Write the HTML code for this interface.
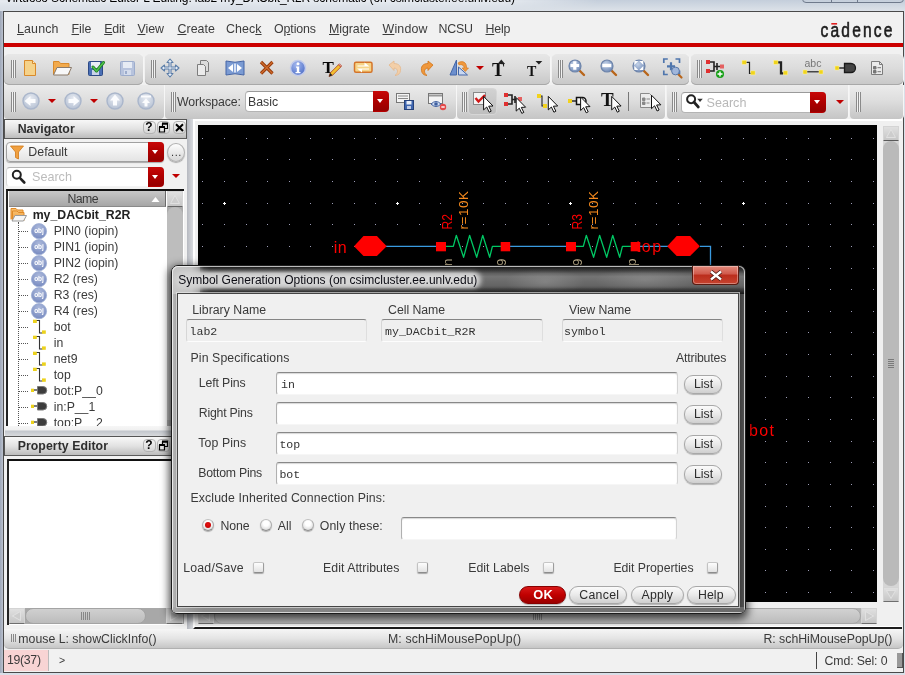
<!DOCTYPE html>
<html><head><meta charset="utf-8">
<style>
*{box-sizing:border-box;margin:0;padding:0}
html,body{width:905px;height:675px;overflow:hidden;background:#d9dfe8;font-family:"Liberation Sans",sans-serif;font-size:12px;color:#222}
.a{position:absolute}
#root{position:absolute;left:0;top:0;width:905px;height:675px;overflow:hidden;transform:translateZ(0);will-change:transform}
.menu{position:absolute;top:21px;font-size:12.6px;color:#333;letter-spacing:0.1px;white-space:pre}
.tbg{position:absolute;background:linear-gradient(#e7e7e7 0%,#dcdcdc 45%,#c7c7c7 100%);border-radius:5px;box-shadow:inset 0 -1px 0 #a8a8a8, 1px 0 0 #f6f6f6}
.tb2{background:linear-gradient(#ebebeb 0%,#dedede 45%,#c5c5c5 100%);border-radius:0 0 4px 4px;box-shadow:1px 0 0 #f6f6f6}
.grip{position:absolute;width:5.500px;background:linear-gradient(90deg,#8a8a8a 0,#8a8a8a .9px,#f2f2f2 .9px,#f2f2f2 2.100px,#8a8a8a 2.100px,#8a8a8a 3px,#f2f2f2 3px,#f2f2f2 4.300px,#8a8a8a 4.300px,#8a8a8a 5.200px,rgba(0,0,0,0) 5.200px)}
.lbl{position:absolute;white-space:pre;font-size:12.6px;color:#2a2a2a;letter-spacing:0.1px}
.mono{font-family:"Liberation Mono",monospace;font-size:11.5px;color:#222;white-space:pre}
.ic{position:absolute;width:20px;height:20px;overflow:visible}
.redbtn{position:absolute;background:linear-gradient(#c80808 0%,#b00000 45%,#960000 92%,#c40000 100%);border-radius:0 4px 4px 0}
.redbtn:after{content:"";position:absolute;left:50%;top:50%;margin:-2.500px 0 0 -3.800px;border:3.800px solid transparent;border-top:4.500px solid #fff;border-bottom:0}
.rarrow{position:absolute;width:0;height:0;border:4px solid transparent;border-top:4.500px solid #c00000;border-bottom:0}
.hdr{position:absolute;background:linear-gradient(#f8f8f8 0%,#e2e2e2 50%,#bcbcbc 100%);border-bottom:1px solid #5a5a5a;border-top:1px solid #555;border-left:1px solid #555;border-right:1px solid #555}
.hdr b{position:absolute;font-size:12.3px;color:#333;white-space:pre;letter-spacing:0.1px}
.hb{position:absolute;width:13px;height:13px;border-radius:4px;background:linear-gradient(#f4f4f4,#d6d6d6);border:1px solid #b2b2b2;font-weight:bold;font-size:12px;line-height:11px;text-align:center;color:#000}
.sbtn{position:absolute;background:linear-gradient(#e0e0e0,#c6c6c6);border:1px solid #d4d4d4;border-bottom-color:#6e6e6e}
.btn{position:absolute;height:18.500px;border-radius:9px;background:linear-gradient(#fbfbfb 0%,#e9e9e9 50%,#cfcfcf 100%);border:1px solid #a8a8a8;box-shadow:0 1px 1px rgba(0,0,0,.25);font-size:12.6px;color:#222;text-align:center;line-height:17px;letter-spacing:0.2px}
.inp{position:absolute;background:#fff;border:1px solid;border-color:#888 #d4d4d4 #f6f6f6 #b0b0b0;border-radius:3px;box-shadow:inset 0 1px 1px rgba(0,0,0,.16)}
.i2{border:1px solid #b4b4b4;border-top:1px solid #9a9a9a;box-shadow:none}
.ro{position:absolute;background:#efefef;border:1px solid;border-color:#858585 #dedede #fdfdfd #d6d6d6;border-radius:3px}
.cb{position:absolute;width:11px;height:11px;border:1px solid;border-color:#c6c6c6 #9c9c9c #8c8c8c #c2c2c2;border-radius:2px;background:linear-gradient(#fdfdfd,#e2e2e2);box-shadow:0 1px 1px rgba(0,0,0,.3)}
.rd{position:absolute;width:12px;height:12px;border:1px solid;border-color:#c0c0c0 #aaa #8e8e8e #b4b4b4;border-radius:50%;background:radial-gradient(circle at 50% 35%,#fff 30%,#e6e6e6 65%,#cdcdcd 100%);box-shadow:0 1px 1px rgba(0,0,0,.28)}
</style></head><body><div id="root">
<div class="a" style="left:0;top:0;width:905px;height:12px;background:linear-gradient(#c4cedb,#dfe4ea)"></div><div class="a" style="left:0;top:-2px;width:600px;height:12px;background:linear-gradient(90deg,rgba(255,255,255,.55) 0,rgba(255,255,255,.55) 500px,rgba(255,255,255,0) 600px);-webkit-mask-image:linear-gradient(#000 30%,transparent 100%);mask-image:linear-gradient(#000 30%,transparent 100%)"></div><span class="a" style="left:5.00px;top:-9.16px;font-size:12px;line-height:14px;color:#000;white-space:pre;letter-spacing:-0.115px;">Virtuoso Schematic Editor L Editing: lab2 my_DACbit_R2R schematic (on csimcluster.ee.unlv.edu)</span><div class="a" style="left:802px;top:-10px;width:102px;height:13px;border:1px solid #6f7a8c;border-radius:0 0 4px 4px;background:linear-gradient(90deg,transparent 28px,#6f7a8c 28px,#6f7a8c 29px,transparent 29px,transparent 54px,#6f7a8c 54px,#6f7a8c 55px,transparent 55px)"></div>
<div class="a" style="left:0;top:11px;width:4px;height:664px;background:linear-gradient(90deg,#9ea7b8,#c4cad6)"></div><div class="a" style="left:3px;top:11px;width:901px;height:662px;background:#f1f1f1;border:1px solid #4a4a4a"></div>
<span class="a" style="left:17.00px;top:21.70px;font-size:12.4px;line-height:14px;color:#3c3c3c;white-space:pre;letter-spacing:0.164px;"><u>L</u>aunch</span><span class="a" style="left:71.50px;top:21.70px;font-size:12.4px;line-height:14px;color:#3c3c3c;white-space:pre;letter-spacing:0.007px;"><u>F</u>ile</span><span class="a" style="left:104.20px;top:21.70px;font-size:12.4px;line-height:14px;color:#3c3c3c;white-space:pre;letter-spacing:-0.189px;"><u>E</u>dit</span><span class="a" style="left:137.40px;top:21.70px;font-size:12.4px;line-height:14px;color:#3c3c3c;white-space:pre;letter-spacing:-0.017px;"><u>V</u>iew</span><span class="a" style="left:177.40px;top:21.70px;font-size:12.4px;line-height:14px;color:#3c3c3c;white-space:pre;letter-spacing:0.077px;"><u>C</u>reate</span><span class="a" style="left:226.00px;top:21.70px;font-size:12.4px;line-height:14px;color:#3c3c3c;white-space:pre;letter-spacing:0.088px;">Chec<u>k</u></span><span class="a" style="left:274.00px;top:21.70px;font-size:12.4px;line-height:14px;color:#3c3c3c;white-space:pre;letter-spacing:-0.122px;">O<u>p</u>tions</span><span class="a" style="left:329.00px;top:21.70px;font-size:12.4px;line-height:14px;color:#3c3c3c;white-space:pre;letter-spacing:-0.057px;"><u>M</u>igrate</span><span class="a" style="left:382.50px;top:21.70px;font-size:12.4px;line-height:14px;color:#3c3c3c;white-space:pre;letter-spacing:0.180px;"><u>W</u>indow</span><span class="a" style="left:438.50px;top:21.70px;font-size:12.4px;line-height:14px;color:#3c3c3c;white-space:pre;letter-spacing:-0.212px;">NCSU</span><span class="a" style="left:485.50px;top:21.70px;font-size:12.4px;line-height:14px;color:#3c3c3c;white-space:pre;letter-spacing:-0.167px;"><u>H</u>elp</span><svg class="a" style="left:815px;top:16px;width:85px;height:26px" viewBox="815 16 85 26"><text x="820.5" y="36.700" font-family="Liberation Sans,sans-serif" font-size="19.500" fill="#1c1c1c" stroke="#1c1c1c" stroke-width=".6" textLength="90" lengthAdjust="spacing" transform="translate(820.5 0) scale(.8 1) translate(-820.5 0)">cadence</text><rect x="831.300" y="23" width="5.800" height="1.600" fill="#e02020"/></svg><div class="a" style="left:4px;top:43px;width:899px;height:4px;background:#cc0000"></div>
<div class="tbg " style="left:4px;top:53.5px;width:139px;height:31.200000000000003px"></div><div class="tbg " style="left:145px;top:53.5px;width:405px;height:31.200000000000003px"></div><div class="tbg " style="left:552px;top:53.5px;width:137px;height:31.200000000000003px"></div><div class="tbg " style="left:691px;top:53.5px;width:212px;height:31.200000000000003px"></div><div class="tbg tb2" style="left:4px;top:85px;width:160px;height:34px"></div><div class="tbg tb2" style="left:165px;top:85px;width:291px;height:34px"></div><div class="tbg tb2" style="left:457px;top:85px;width:208px;height:34px"></div><div class="tbg tb2" style="left:667px;top:85px;width:181px;height:34px"></div><div class="tbg tb2" style="left:850px;top:85px;width:53px;height:34px"></div><div class="grip" style="left:10.7px;top:60px;height:18px"></div><div class="grip" style="left:150.7px;top:60px;height:18px"></div><div class="grip" style="left:558px;top:60px;height:18px"></div><div class="grip" style="left:697px;top:60px;height:18px"></div><div class="grip" style="left:10.7px;top:92px;height:20px"></div><div class="grip" style="left:170.7px;top:92px;height:20px"></div><div class="grip" style="left:461.5px;top:92px;height:20px"></div><div class="grip" style="left:672px;top:92px;height:20px"></div><div class="grip" style="left:856px;top:92px;height:20px"></div><svg class="ic" style="left:20.0px;top:58.0px;width:20px;height:20px" viewBox="0 0 20 20"><path d="M4.5 2.5h8l3 3v12h-11z" fill="#f5d28a" stroke="#d98a2b" stroke-width="1"/><path d="M12.5 2.5v3h3" fill="#fbe9bf" stroke="#d98a2b" stroke-width="1"/></svg><svg class="ic" style="left:52.0px;top:58.0px;width:20px;height:20px" viewBox="0 0 20 20"><path d="M1.500 16.500v-13h5.500l1.500 2h8.500v11z" fill="#f2aa4c" stroke="#d98a2b"/><path d="M5 9.500h14.500l-3.500 7.500h-14.500z" fill="#f8f8f8" stroke="#8a7a6a"/></svg><svg class="ic" style="left:86.0px;top:58.0px;width:20px;height:20px" viewBox="0 0 20 20"><rect x="2.5" y="3.5" width="14" height="14" rx="1" fill="#4a6fb5" stroke="#2d4a86"/><rect x="5" y="4" width="9" height="6" fill="#e9eef7"/><rect x="6" y="12" width="7" height="5" fill="#c8d3e8"/><path d="M7 9l3.5 4 7-8.5" fill="none" stroke="#1f7d1f" stroke-width="3" stroke-linecap="round" stroke-linejoin="round"/><path d="M7 9l3.5 4 7-8.5" fill="none" stroke="#4fc44f" stroke-width="1.4" stroke-linecap="round" stroke-linejoin="round"/></svg><svg class="ic" style="left:117.0px;top:58.0px;width:20px;height:20px" viewBox="0 0 20 20"><rect x="3.5" y="3.5" width="14" height="14" rx="1" fill="#b7c3dd" stroke="#9caccc"/><rect x="6" y="4" width="9" height="6" fill="#e6ebf4"/><rect x="7" y="12" width="7" height="5" fill="#d4dcec"/><rect x="8" y="13" width="2" height="3" fill="#9caccc"/></svg><svg class="ic" style="left:160.0px;top:58.0px;width:20px;height:20px" viewBox="0 0 20 20"><path d="M10 1l3 3.5h-2v4.5h4.500v-2l3.500 3-3.500 3v-2h-4.500v4.500h2l-3 3.500-3-3.500h2v-4.500h-4.500v2l-3.500-3 3.500-3v2h4.500v-4.500h-2z" fill="#e8eef6" stroke="#5b7da8" stroke-width="1.1" stroke-linejoin="round"/></svg><svg class="ic" style="left:193.0px;top:58.0px;width:20px;height:20px" viewBox="0 0 20 20"><path d="M7.500 2.500h6l2 2v9h-8z" fill="#dcdcdc" stroke="#7d7d7d"/><path d="M4.500 6.500h6l2 2v9h-8z" fill="#ebebeb" stroke="#7d7d7d"/></svg><svg class="ic" style="left:225.0px;top:58.0px;width:20px;height:20px" viewBox="0 0 20 20"><path d="M1 3q9 2.500 18 0v14q-9-2.500-18 0z" fill="#7b9bd3" stroke="#4464a6" stroke-width="1"/><path d="M3 10l5-4v8zM17 10l-5-4v8z" fill="#fff"/><rect x="9" y="5.500" width="2" height="9" fill="#d8e2f4"/></svg><svg class="ic" style="left:256.0px;top:58.0px;width:20px;height:20px" viewBox="0 0 20 20"><path d="M5 4l11.500 11.500M16.500 4l-11.500 11.500" stroke="#963a0c" stroke-width="3.200"/><path d="M5 4l11.500 11.500M16.500 4l-11.500 11.500" stroke="#d06c2c" stroke-width="1.300"/></svg><svg class="ic" style="left:288.0px;top:58.0px;width:20px;height:20px" viewBox="0 0 20 20"><defs><radialGradient id="ig" cx=".4" cy=".3" r=".8"><stop offset="0" stop-color="#a4b8ee"/><stop offset="1" stop-color="#4668c4"/></radialGradient></defs><circle cx="10" cy="10" r="7.500" fill="url(#ig)" stroke="#c2cbea" stroke-width="1.500"/><circle cx="10" cy="5.800" r="1.500" fill="#fff"/><path d="M8 8.500h3.200v5.500h1.300v1.300h-5v-1.300h1.300v-4.200h-.8z" fill="#fff"/></svg><svg class="ic" style="left:321.0px;top:58.0px;width:20px;height:20px" viewBox="0 0 20 20"><text x="1.500" y="14.800" font-family="Liberation Serif,serif" font-weight="bold" font-size="17" fill="#080808">T</text><path d="M8 18.500l1.200-3.500 8.300-8.300 2.300 2.300-8.300 8.300z" fill="#f4c030" stroke="#a8401c" stroke-width=".8"/><path d="M17.500 6.700l1-1 2.300 2.300-1 1z" fill="#f0a0a0" stroke="#a8401c" stroke-width=".6"/><path d="M8 18.500l1.200-3.500 2.300 2.300z" fill="#222"/></svg><svg class="ic" style="left:353.0px;top:58.0px;width:20px;height:20px" viewBox="0 0 20 20"><rect x="1.500" y="4.300" width="17.500" height="10" rx="1.500" fill="#f6d488" stroke="#d4742a" stroke-width="1.500"/><path d="M4.500 7.500h7v-3l5 4h-12zM16 11.500h-7v3l-5-4h12z" fill="#fff"/></svg><svg class="ic" style="left:385.0px;top:58.0px;width:20px;height:20px" viewBox="0 0 20 20"><path d="M4 7l5-4v2.500c5 0 8 3 6 9-1 2-3 3-5 3 3-2 4-7-1-7.500v2.500z" fill="#f3cfa8" stroke="#e5b88c" stroke-width=".8"/></svg><svg class="ic" style="left:417.0px;top:58.0px;width:20px;height:20px" viewBox="0 0 20 20"><path d="M16 7l-5-4v2.500c-5 0-8 3-6 9 1 2 3 3 5 3-3-2-4-7 1-7.500v2.500z" fill="#f0983c" stroke="#d07418" stroke-width=".8"/></svg><svg class="ic" style="left:449.0px;top:58.0px;width:20px;height:20px" viewBox="0 0 20 20"><path d="M1 17l6.500-15v15z" fill="#6c8fce" stroke="#4467a8"/><path d="M9.500 17v-8l9 8z" fill="#c9d8f2" stroke="#4467a8"/><path d="M9 5c4-3 9-1 8.500 5h2l-3.200 3.500-3.200-3.500h2c0-3-3-4-5-3z" fill="#f0983c" stroke="#d07418" stroke-width=".6"/></svg><svg class="ic" style="left:489.0px;top:58.0px;width:20px;height:20px" viewBox="0 0 20 20"><text x="3" y="18.400" font-family="Liberation Serif,serif" font-weight="bold" font-size="18.500" fill="#111">T</text><path d="M8.500 6l3.800-4.500 3.800 4.500z" fill="#222"/></svg><svg class="ic" style="left:521.0px;top:58.0px;width:20px;height:20px" viewBox="0 0 20 20"><text x="6" y="17.700" font-family="Liberation Serif,serif" font-weight="bold" font-size="14" fill="#111">T</text><path d="M14.500 3l3.400 3.600 3.400-3.600z" fill="#222"/></svg><svg class="ic" style="left:567.0px;top:58.0px;width:20px;height:20px" viewBox="0 0 20 20"><defs><radialGradient id="mg" cx=".4" cy=".35" r=".7"><stop offset="0" stop-color="#c4d2e8"/><stop offset="1" stop-color="#6f8ab6"/></radialGradient></defs><path d="M12 12l5 5" stroke="#b8651a" stroke-width="2.4" stroke-linecap="round"/><circle cx="8" cy="8" r="6" fill="url(#mg)" stroke="#6d84aa" stroke-width="1.2"/><path d="M3.500 7.500h8.600M7.800 3.200v8.600" stroke="#fff" stroke-width="3.200"/></svg><svg class="ic" style="left:599.0px;top:58.0px;width:20px;height:20px" viewBox="0 0 20 20"><defs><radialGradient id="mg" cx=".4" cy=".35" r=".7"><stop offset="0" stop-color="#c4d2e8"/><stop offset="1" stop-color="#6f8ab6"/></radialGradient></defs><path d="M12 12l5 5" stroke="#b8651a" stroke-width="2.4" stroke-linecap="round"/><circle cx="8" cy="8" r="6" fill="url(#mg)" stroke="#6d84aa" stroke-width="1.2"/><path d="M3.300 7.500h9" stroke="#fff" stroke-width="3.400"/></svg><svg class="ic" style="left:631.0px;top:58.0px;width:20px;height:20px" viewBox="0 0 20 20"><defs><radialGradient id="mg" cx=".4" cy=".35" r=".7"><stop offset="0" stop-color="#c4d2e8"/><stop offset="1" stop-color="#6f8ab6"/></radialGradient></defs><path d="M12 12l5 5" stroke="#b8651a" stroke-width="2.4" stroke-linecap="round"/><circle cx="8" cy="8" r="6" fill="url(#mg)" stroke="#6d84aa" stroke-width="1.2"/><path d="M3.300 3h4l-4 4zM12.300 3h-4l4 4zM3.300 12h4l-4-4zM12.300 12h-4l4-4z" fill="#fff"/></svg><svg class="ic" style="left:662.0px;top:58.0px;width:20px;height:20px" viewBox="0 0 20 20"><path d="M1.800 5v-4h4M13.500 1h4v4M1.800 12.500v4h4M17.500 12.500v4" fill="none" stroke="#4f76ad" stroke-width="1.700"/><path d="M5 8.300h8M9 4.300v8" stroke="#4f76ad" stroke-width="2.200"/><path d="M15.500 15.500l4 4" stroke="#b8651a" stroke-width="2.200" stroke-linecap="round"/><circle cx="13.500" cy="13" r="3.900" fill="#9fb6dc" stroke="#5a78a6"/></svg><svg class="ic" style="left:705.0px;top:58.0px;width:20px;height:20px" viewBox="0 0 20 20"><path d="M4 4h5v9h-5M9 8.500h7M12 5v7" fill="none" stroke="#222" stroke-width="1.600"/><rect x="1" y="2" width="4" height="4" fill="#e03030"/><rect x="1" y="11" width="4" height="4" fill="#e03030"/><rect x="15" y="6.500" width="4" height="4" fill="#e46060"/><circle cx="15" cy="16" r="4" fill="#18a018"/><path d="M12.500 16h5M15 13.500v5" stroke="#fff" stroke-width="1.400"/></svg><svg class="ic" style="left:738.0px;top:58.0px;width:20px;height:20px" viewBox="0 0 20 20"><path d="M8 4.300h3.500v11h2.500" fill="none" stroke="#222" stroke-width="1.200"/><rect x="4" y="2.300" width="4.300" height="4" fill="#f0d41c" stroke="#fff3a0" stroke-width=".5"/><rect x="12.800" y="12.900" width="4.300" height="4" fill="#f0d41c" stroke="#fff3a0" stroke-width=".5"/></svg><svg class="ic" style="left:770.0px;top:58.0px;width:20px;height:20px" viewBox="0 0 20 20"><path d="M8 4.300h3v11h3" fill="none" stroke="#222" stroke-width="2.300"/><rect x="3.700" y="2.300" width="4.300" height="4" fill="#f0d41c" stroke="#fff3a0" stroke-width=".5"/><rect x="13.300" y="12.900" width="4.300" height="4" fill="#f0d41c" stroke="#fff3a0" stroke-width=".5"/></svg><svg class="ic" style="left:802.0px;top:58.0px;width:20px;height:20px" viewBox="0 0 20 20"><text x="2.500" y="8.500" font-family="Liberation Sans,sans-serif" font-size="10.500" fill="#777">abc</text><path d="M3 13.800h16" stroke="#222" stroke-width="1.200"/><rect x="1" y="12" width="4" height="4" fill="#f0d41c" stroke="#fff3a0" stroke-width=".5"/><rect x="17" y="12" width="4" height="4" fill="#f0d41c" stroke="#fff3a0" stroke-width=".5"/></svg><svg class="ic" style="left:835.0px;top:58.0px;width:20px;height:20px" viewBox="0 0 20 20"><path d="M3 10h6" stroke="#222" stroke-width="1.400"/><path d="M9.500 5.500h6.500a4.500 4.500 0 0 1 0 9h-6.500z" fill="#444" stroke="#1a1a1a" stroke-width="1.300"/><rect x="0" y="8" width="4" height="4" fill="#f0d41c" stroke="#fff3a0" stroke-width=".5"/></svg><svg class="ic" style="left:867.0px;top:58.0px;width:20px;height:20px" viewBox="0 0 20 20"><path d="M4.500 3.500h8l3 3v10h-11z" fill="#eaeaea" stroke="#7c7c7c"/><path d="M12.500 3.500v3h3" fill="none" stroke="#7c7c7c"/><path d="M6.500 8.500h2.500v2.500h-2.500zM6.500 12.500h2.500v2.500h-2.500zM10.500 9.700h3.500M10.500 13.700h3.500" fill="#777" stroke="#777" stroke-width="1"/></svg><div class="rarrow" style="left:476px;top:66px"></div><svg class="ic" style="left:21.0px;top:91.0px;width:20px;height:20px" viewBox="0 0 20 20"><defs><radialGradient id="ng" cx=".5" cy=".35" r=".7"><stop offset="0" stop-color="#e6eaf1"/><stop offset="1" stop-color="#b4bfd2"/></radialGradient></defs><circle cx="10" cy="10" r="8" fill="url(#ng)" stroke="#aab6cb" stroke-width="1.400"/><path d="M3.500 10l6-5v3h5v4h-5v3z" fill="#fbfcfe"/></svg><svg class="ic" style="left:63.0px;top:91.0px;width:20px;height:20px" viewBox="0 0 20 20"><defs><radialGradient id="ng" cx=".5" cy=".35" r=".7"><stop offset="0" stop-color="#e6eaf1"/><stop offset="1" stop-color="#b4bfd2"/></radialGradient></defs><circle cx="10" cy="10" r="8" fill="url(#ng)" stroke="#aab6cb" stroke-width="1.400"/><path d="M16.500 10l-6-5v3h-5v4h5v3z" fill="#fbfcfe"/></svg><svg class="ic" style="left:105.0px;top:91.0px;width:20px;height:20px" viewBox="0 0 20 20"><defs><radialGradient id="ng" cx=".5" cy=".35" r=".7"><stop offset="0" stop-color="#e6eaf1"/><stop offset="1" stop-color="#b4bfd2"/></radialGradient></defs><circle cx="10" cy="10" r="8" fill="url(#ng)" stroke="#aab6cb" stroke-width="1.400"/><path d="M10 3.500l-5 6h3v5h4v-5h3z" fill="#fbfcfe"/></svg><svg class="ic" style="left:136.0px;top:91.0px;width:20px;height:20px" viewBox="0 0 20 20"><defs><radialGradient id="ng" cx=".5" cy=".35" r=".7"><stop offset="0" stop-color="#e6eaf1"/><stop offset="1" stop-color="#b4bfd2"/></radialGradient></defs><circle cx="10" cy="10" r="8" fill="url(#ng)" stroke="#aab6cb" stroke-width="1.400"/><path d="M5 4.500h10v2h-10zM10 7.500l-4 4.500h2.500v3.500h3v-3.500h2.500z" fill="#fbfcfe"/></svg><svg class="ic" style="left:395.0px;top:91.0px;width:20px;height:20px" viewBox="0 0 20 20"><rect x="1.500" y="2.500" width="13" height="9" fill="#f4f4f4" stroke="#777"/><path d="M3 5h10M3 7.500h10" stroke="#888"/><rect x="9.500" y="9.500" width="9" height="9" fill="#3f66b0" stroke="#27427a"/><rect x="11.500" y="10" width="5" height="3.500" fill="#e8eef8"/><rect x="12" y="15" width="4" height="3" fill="#c0cce4"/></svg><svg class="ic" style="left:427.0px;top:91.0px;width:20px;height:20px" viewBox="0 0 20 20"><rect x="1.500" y="2.500" width="14" height="10" fill="#f4f4f4" stroke="#777"/><path d="M2 4.500h13" stroke="#999" stroke-width="2"/><path d="M4 13q5-5 10 0q-5 5-10 0z" fill="#cfdcf2" stroke="#3f5f9f"/><circle cx="9" cy="13" r="1.800" fill="#3f5f9f"/><circle cx="16" cy="16" r="3.200" fill="#e24a4a"/><path d="M14.300 16h3.400" stroke="#fff" stroke-width="1.400"/></svg><div class="rarrow" style="left:48px;top:99px"></div><div class="rarrow" style="left:90px;top:99px"></div><span class="a" style="left:177.00px;top:94.74px;font-size:12.3px;line-height:14px;color:#3a3a3a;white-space:pre;letter-spacing:-0.079px;">Workspace:</span><div class="inp i2" style="left:245px;top:91px;width:144px;height:21px;border-radius:4px"></div><span class="a" style="left:248.00px;top:94.74px;font-size:12.3px;line-height:14px;color:#3a3a3a;white-space:pre;letter-spacing:0.000px;">Basic</span><div class="redbtn" style="left:373px;top:91px;width:16px;height:21px"></div><div class="a" style="left:468px;top:88px;width:29px;height:27px;border-radius:4px;background:linear-gradient(#d2d2d2,#bebebe);border:1px solid #d6d6d6"></div><svg class="ic" style="left:472.0px;top:91.0px;width:20px;height:20px" viewBox="0 0 20 20"><rect x="1.500" y="1.500" width="12" height="12" fill="#f4f4f4" stroke="#888"/><path d="M3.500 7l3 3.500 6.500-6.500" fill="none" stroke="#d01818" stroke-width="2.400"/><path d="M11.6 5.4l0 13.500 3.100-2.900 2.500 5.200 2-1-2.500-5 4.300-.200z" fill="#fff" stroke="#111" stroke-width="1" stroke-linejoin="round"/></svg><svg class="ic" style="left:503.0px;top:91.0px;width:20px;height:20px" viewBox="0 0 20 20"><path d="M4 4h5v9h-5M9 8.500h6M12 5v7" fill="none" stroke="#222" stroke-width="1.600"/><rect x="1" y="2" width="4" height="4" fill="#e03030"/><rect x="1" y="11" width="4" height="4" fill="#e03030"/><rect x="15" y="6" width="4" height="4" fill="#e46060"/><path d="M13.2 6.6l0 13.500 3.100-2.900 2.500 5.200 2-1-2.500-5 4.300-.200z" fill="#fff" stroke="#111" stroke-width="1" stroke-linejoin="round"/></svg><svg class="ic" style="left:534.0px;top:91.0px;width:20px;height:20px" viewBox="0 0 20 20"><path d="M5 5h3v10h3" fill="none" stroke="#222" stroke-width="1.100"/><rect x="3" y="3" width="4" height="4" fill="#f2d21c"/><rect x="9" y="13" width="4" height="4" fill="#f2d21c"/><path d="M14.3 5.4l0 13.500 3.100-2.900 2.500 5.200 2-1-2.500-5 4.300-.200z" fill="#fff" stroke="#111" stroke-width="1" stroke-linejoin="round"/></svg><svg class="ic" style="left:568.0px;top:91.0px;width:20px;height:20px" viewBox="0 0 20 20"><path d="M3 10h6" stroke="#222" stroke-width="1.400"/><path d="M8.500 6.500h6a3.500 3.500 0 0 1 0 7h-6z" fill="#f4f4f4" stroke="#111" stroke-width="1.500"/><rect x="0" y="8" width="4" height="4" fill="#f2d21c"/><path d="M12.6 6l0 13.500 3.100-2.900 2.500 5.200 2-1-2.500-5 4.300-.200z" fill="#fff" stroke="#111" stroke-width="1" stroke-linejoin="round"/></svg><svg class="ic" style="left:601.0px;top:91.0px;width:20px;height:20px" viewBox="0 0 20 20"><text x="0" y="15" font-family="Liberation Serif,serif" font-weight="bold" font-size="19" fill="#111">T</text><path d="M10.7 5.4l0 13.500 3.100-2.900 2.500 5.200 2-1-2.500-5 4.300-.200z" fill="#fff" stroke="#111" stroke-width="1" stroke-linejoin="round"/></svg><svg class="ic" style="left:638.0px;top:91.0px;width:20px;height:20px" viewBox="0 0 20 20"><path d="M2.500 2.500h9l3 3v11h-12z" fill="#ececec" stroke="#8a8a8a"/><path d="M4.500 7h2.500v2.500h-2.500zM4.500 11h2.500v2.500h-2.500zM8.500 8h3.500M8.500 12h3" fill="#888" stroke="#888" stroke-width="1"/><path d="M13.5 4.2l0 13.500 3.100-2.900 2.500 5.200 2-1-2.500-5 4.300-.200z" fill="#fff" stroke="#111" stroke-width="1" stroke-linejoin="round"/></svg><div class="a" style="left:628px;top:92px;width:1px;height:19px;background:#777"></div><div class="inp i2" style="left:681px;top:92px;width:145px;height:21px;border-radius:4px"></div><svg class="ic" style="left:685px;top:93px;width:20px;height:18px" viewBox="0 0 18 16"><circle cx="5.500" cy="5.500" r="3.600" fill="#fff" stroke="#222" stroke-width="1.800"/><path d="M8 8l4 4.500" stroke="#222" stroke-width="2.400" stroke-linecap="round"/><path d="M11 5h5l-2.500 3z" fill="#333"/></svg><span class="a" style="left:706.50px;top:95.63px;font-size:12.6px;line-height:14px;color:#b8b8b8;white-space:pre;letter-spacing:0.000px;">Search</span><div class="redbtn" style="left:810px;top:92px;width:16px;height:21px"></div><div class="rarrow" style="left:836px;top:100px"></div>
<div class="a" style="left:187px;top:119px;width:6px;height:510px;background:linear-gradient(90deg,#b6b9c0,#d8dade)"></div><div class="hdr" style="left:4px;top:119px;width:183px;height:20px"></div><span class="a" style="left:17.70px;top:121.74px;font-size:12.3px;line-height:14px;color:#2e2e2e;white-space:pre;letter-spacing:0.034px;font-weight:bold;">Navigator</span><div class="hb" style="left:142.5px;top:121.3px">?</div><div class="hb" style="left:157.3px;top:121.3px"><svg width="11" height="11" viewBox="0 0 11 11" style="position:absolute;left:0;top:0"><path d="M4.500 2h5v4.500h-5z" fill="#e8e8e8" stroke="#000" stroke-width="1.200"/><path d="M4 1.500h6" stroke="#000" stroke-width="2"/><path d="M1.500 5.500h5v4.500h-5z" fill="#e8e8e8" stroke="#000" stroke-width="1.200"/><path d="M1 5h6" stroke="#000" stroke-width="2"/></svg></div><div class="hb" style="left:172.5px;top:121.3px"><svg width="11" height="11" viewBox="0 0 11 11" style="position:absolute;left:0;top:0"><path d="M2 2.300l7 6.700M9 2.300l-7 6.700" stroke="#000" stroke-width="2"/></svg></div><div class="a" style="left:6px;top:142px;width:158px;height:20px;border-radius:4px;background:linear-gradient(#fcfcfc,#e4e4e4);border:1px solid #a0a0a0;box-shadow:0 1px 1px rgba(0,0,0,.3)"></div><svg class="ic" style="left:10px;top:145px;width:14px;height:15px" viewBox="0 0 14 15"><path d="M0.500 1h13l-5 6v7l-3-1.500v-5.500z" fill="#f0a040" stroke="#d07818" stroke-width=".8"/></svg><span class="a" style="left:28.30px;top:144.70px;font-size:12.4px;line-height:14px;color:#3a3a3a;white-space:pre;letter-spacing:0.000px;">Default</span><div class="redbtn" style="left:148px;top:142px;width:16px;height:20px"></div><div class="a" style="left:167px;top:142.500px;width:18px;height:19px;border-radius:50%;background:linear-gradient(#fdfdfd,#d6d6d6);border:1px solid #b0b0b0;box-shadow:0 1px 1px rgba(0,0,0,.3);font-size:11px;line-height:17px;text-align:center;color:#333;letter-spacing:.6px;text-indent:1px">...</div><div class="inp i2" style="left:6px;top:167px;width:158px;height:20px;border-radius:4px;border-color:#b4b4b4 #e0e0e0 #f4f4f4 #d8d8d8"></div><svg class="ic" style="left:11px;top:169px;width:16px;height:16px" viewBox="0 0 16 16"><circle cx="5.800" cy="5.800" r="4" fill="#fff" stroke="#222" stroke-width="2"/><path d="M8.800 8.800l4.500 4.700" stroke="#222" stroke-width="2.600" stroke-linecap="round"/></svg><span class="a" style="left:32.00px;top:169.63px;font-size:12.6px;line-height:14px;color:#bcbcbc;white-space:pre;letter-spacing:0.000px;">Search</span><div class="redbtn" style="left:148px;top:167px;width:16px;height:20px"></div><div class="rarrow" style="left:172px;top:174px"></div><div class="a" style="left:6px;top:189px;width:178px;height:237px;background:#fff;border-left:2.500px solid #222;border-top:2px solid #111"></div><div class="a" style="left:9px;top:191px;width:157px;height:16px;background:linear-gradient(#c8c8c8,#a6a6a6);border-bottom:1px solid #8a8a8a;border-right:1px solid #6a6a6a"></div><span class="a" style="left:67.50px;top:191.74px;font-size:12.3px;line-height:14px;color:#3a3a3a;white-space:pre;letter-spacing:-0.603px;">Name</span><svg class="ic" style="left:150px;top:196px;width:11px;height:7px" viewBox="0 0 11 7"><path d="M1.500 6l4-5 4 5z" fill="#fff"/></svg><div class="a" style="left:167px;top:191px;width:16px;height:235px;background:#aaaaaa"></div><div class="sbtn" style="left:167px;top:191px;width:16px;height:16px;border-bottom:1px solid #666"></div><svg class="ic" style="left:170px;top:195px;width:10px;height:9px" viewBox="0 0 10 9"><path d="M0.500 8.500l4.500-8 4.500 8z" fill="#cdcdcd" stroke="#e4e4e4" stroke-width=".8" stroke-width="1"/></svg><div class="a" style="left:167px;top:207px;width:16px;height:213px;border-radius:8px 8px 0 0;background:#bdbdbd"></div><svg class="ic" style="left:10px;top:206px;width:18px;height:17px" viewBox="0 0 18 17"><defs><linearGradient id="fg" x1="0" y1="0" x2="0" y2="1"><stop offset="0" stop-color="#f8c070"/><stop offset="1" stop-color="#ee9a38"/></linearGradient></defs><path d="M1 13.500v-11h5l1.500 1.500h5.500v3" fill="url(#fg)" stroke="#e08a28"/><path d="M2.500 14.500v-9.500h4.500l1.500 1.500h5.500v8z" fill="url(#fg)" stroke="#e08a28"/><path d="M5 9.500h11.500l-3 5.500h-11.500z" fill="#f6f6f6" stroke="#9a9a9a"/></svg><span class="a" style="left:32.70px;top:207.74px;font-size:12.3px;line-height:14px;color:#222;white-space:pre;letter-spacing:-0.003px;font-weight:bold;">my_DACbit_R2R</span><div class="a" style="left:18px;top:222px;width:0;height:204px;border-left:1px dotted #555"></div><div class="a" style="left:9px;top:222px;width:157px;height:203.500px;overflow:hidden"><div class="a" style="left:10px;top:9px;width:9px;height:0;border-top:1px dotted #555"></div><svg class="ic" style="left:22px;top:1px;width:16px;height:16px" viewBox="0 0 16 16"><defs><radialGradient id="og" cx=".5" cy=".3" r=".8"><stop offset="0" stop-color="#aebbdc"/><stop offset="1" stop-color="#6f83bc"/></radialGradient></defs><circle cx="8" cy="8.200" r="7.600" fill="url(#og)" stroke="#9fb0d6" stroke-width=".8"/><text x="8" y="10.300" text-anchor="middle" font-family="Liberation Sans,sans-serif" font-weight="bold" font-size="6.500" fill="#fff">obj</text></svg><span class="a" style="left:44.70px;top:1.76px;font-size:12.25px;line-height:14px;color:#3a3a3a;white-space:pre;letter-spacing:0.000px;">PIN0 (iopin)</span><div class="a" style="left:10px;top:25px;width:9px;height:0;border-top:1px dotted #555"></div><svg class="ic" style="left:22px;top:17px;width:16px;height:16px" viewBox="0 0 16 16"><defs><radialGradient id="og" cx=".5" cy=".3" r=".8"><stop offset="0" stop-color="#aebbdc"/><stop offset="1" stop-color="#6f83bc"/></radialGradient></defs><circle cx="8" cy="8.200" r="7.600" fill="url(#og)" stroke="#9fb0d6" stroke-width=".8"/><text x="8" y="10.300" text-anchor="middle" font-family="Liberation Sans,sans-serif" font-weight="bold" font-size="6.500" fill="#fff">obj</text></svg><span class="a" style="left:44.70px;top:17.76px;font-size:12.25px;line-height:14px;color:#3a3a3a;white-space:pre;letter-spacing:0.000px;">PIN1 (iopin)</span><div class="a" style="left:10px;top:41px;width:9px;height:0;border-top:1px dotted #555"></div><svg class="ic" style="left:22px;top:33px;width:16px;height:16px" viewBox="0 0 16 16"><defs><radialGradient id="og" cx=".5" cy=".3" r=".8"><stop offset="0" stop-color="#aebbdc"/><stop offset="1" stop-color="#6f83bc"/></radialGradient></defs><circle cx="8" cy="8.200" r="7.600" fill="url(#og)" stroke="#9fb0d6" stroke-width=".8"/><text x="8" y="10.300" text-anchor="middle" font-family="Liberation Sans,sans-serif" font-weight="bold" font-size="6.500" fill="#fff">obj</text></svg><span class="a" style="left:44.70px;top:33.76px;font-size:12.25px;line-height:14px;color:#3a3a3a;white-space:pre;letter-spacing:0.000px;">PIN2 (iopin)</span><div class="a" style="left:10px;top:57px;width:9px;height:0;border-top:1px dotted #555"></div><svg class="ic" style="left:22px;top:49px;width:16px;height:16px" viewBox="0 0 16 16"><defs><radialGradient id="og" cx=".5" cy=".3" r=".8"><stop offset="0" stop-color="#aebbdc"/><stop offset="1" stop-color="#6f83bc"/></radialGradient></defs><circle cx="8" cy="8.200" r="7.600" fill="url(#og)" stroke="#9fb0d6" stroke-width=".8"/><text x="8" y="10.300" text-anchor="middle" font-family="Liberation Sans,sans-serif" font-weight="bold" font-size="6.500" fill="#fff">obj</text></svg><span class="a" style="left:44.70px;top:49.76px;font-size:12.25px;line-height:14px;color:#3a3a3a;white-space:pre;letter-spacing:0.000px;">R2 (res)</span><div class="a" style="left:10px;top:73px;width:9px;height:0;border-top:1px dotted #555"></div><svg class="ic" style="left:22px;top:65px;width:16px;height:16px" viewBox="0 0 16 16"><defs><radialGradient id="og" cx=".5" cy=".3" r=".8"><stop offset="0" stop-color="#aebbdc"/><stop offset="1" stop-color="#6f83bc"/></radialGradient></defs><circle cx="8" cy="8.200" r="7.600" fill="url(#og)" stroke="#9fb0d6" stroke-width=".8"/><text x="8" y="10.300" text-anchor="middle" font-family="Liberation Sans,sans-serif" font-weight="bold" font-size="6.500" fill="#fff">obj</text></svg><span class="a" style="left:44.70px;top:65.76px;font-size:12.25px;line-height:14px;color:#3a3a3a;white-space:pre;letter-spacing:0.000px;">R3 (res)</span><div class="a" style="left:10px;top:89px;width:9px;height:0;border-top:1px dotted #555"></div><svg class="ic" style="left:22px;top:81px;width:16px;height:16px" viewBox="0 0 16 16"><defs><radialGradient id="og" cx=".5" cy=".3" r=".8"><stop offset="0" stop-color="#aebbdc"/><stop offset="1" stop-color="#6f83bc"/></radialGradient></defs><circle cx="8" cy="8.200" r="7.600" fill="url(#og)" stroke="#9fb0d6" stroke-width=".8"/><text x="8" y="10.300" text-anchor="middle" font-family="Liberation Sans,sans-serif" font-weight="bold" font-size="6.500" fill="#fff">obj</text></svg><span class="a" style="left:44.70px;top:81.76px;font-size:12.25px;line-height:14px;color:#3a3a3a;white-space:pre;letter-spacing:0.000px;">R4 (res)</span><div class="a" style="left:10px;top:105px;width:9px;height:0;border-top:1px dotted #555"></div><svg class="ic" style="left:22px;top:97px;width:16px;height:16px" viewBox="0 0 16 16"><path d="M5 1.500h3.500v12.500h3" fill="none" stroke="#333" stroke-width="1.100"/><rect x="2" y="0.700" width="3.800" height="3.300" fill="#ecd21c"/><rect x="11" y="11.400" width="3.800" height="3.400" fill="#ecd21c"/></svg><span class="a" style="left:44.70px;top:97.76px;font-size:12.25px;line-height:14px;color:#3a3a3a;white-space:pre;letter-spacing:0.000px;">bot</span><div class="a" style="left:10px;top:121px;width:9px;height:0;border-top:1px dotted #555"></div><svg class="ic" style="left:22px;top:113px;width:16px;height:16px" viewBox="0 0 16 16"><path d="M5 1.500h3.500v12.500h3" fill="none" stroke="#333" stroke-width="1.100"/><rect x="2" y="0.700" width="3.800" height="3.300" fill="#ecd21c"/><rect x="11" y="11.400" width="3.800" height="3.400" fill="#ecd21c"/></svg><span class="a" style="left:44.70px;top:113.76px;font-size:12.25px;line-height:14px;color:#3a3a3a;white-space:pre;letter-spacing:0.000px;">in</span><div class="a" style="left:10px;top:137px;width:9px;height:0;border-top:1px dotted #555"></div><svg class="ic" style="left:22px;top:129px;width:16px;height:16px" viewBox="0 0 16 16"><path d="M5 1.500h3.500v12.500h3" fill="none" stroke="#333" stroke-width="1.100"/><rect x="2" y="0.700" width="3.800" height="3.300" fill="#ecd21c"/><rect x="11" y="11.400" width="3.800" height="3.400" fill="#ecd21c"/></svg><span class="a" style="left:44.70px;top:129.76px;font-size:12.25px;line-height:14px;color:#3a3a3a;white-space:pre;letter-spacing:0.000px;">net9</span><div class="a" style="left:10px;top:153px;width:9px;height:0;border-top:1px dotted #555"></div><svg class="ic" style="left:22px;top:145px;width:16px;height:16px" viewBox="0 0 16 16"><path d="M5 1.500h3.500v12.500h3" fill="none" stroke="#333" stroke-width="1.100"/><rect x="2" y="0.700" width="3.800" height="3.300" fill="#ecd21c"/><rect x="11" y="11.400" width="3.800" height="3.400" fill="#ecd21c"/></svg><span class="a" style="left:44.70px;top:145.76px;font-size:12.25px;line-height:14px;color:#3a3a3a;white-space:pre;letter-spacing:0.000px;">top</span><div class="a" style="left:10px;top:169px;width:9px;height:0;border-top:1px dotted #555"></div><svg class="ic" style="left:20px;top:161px;width:18px;height:16px" viewBox="0 0 18 16"><path d="M4 7h5" stroke="#333" stroke-width="1.300"/><path d="M8.500 3.500h5.500a3.500 3.500 0 0 1 0 7.500h-5.500z" fill="#3c3c3c" stroke="#7a7a7a" stroke-width="1"/><rect x="2" y="5.700" width="3" height="3.300" fill="#ecd21c"/></svg><span class="a" style="left:44.70px;top:161.76px;font-size:12.25px;line-height:14px;color:#3a3a3a;white-space:pre;letter-spacing:0.000px;">bot:P__0</span><div class="a" style="left:10px;top:185px;width:9px;height:0;border-top:1px dotted #555"></div><svg class="ic" style="left:20px;top:177px;width:18px;height:16px" viewBox="0 0 18 16"><path d="M4 7h5" stroke="#333" stroke-width="1.300"/><path d="M8.500 3.500h5.500a3.500 3.500 0 0 1 0 7.500h-5.500z" fill="#3c3c3c" stroke="#7a7a7a" stroke-width="1"/><rect x="2" y="5.700" width="3" height="3.300" fill="#ecd21c"/></svg><span class="a" style="left:44.70px;top:177.76px;font-size:12.25px;line-height:14px;color:#3a3a3a;white-space:pre;letter-spacing:0.000px;">in:P__1</span><div class="a" style="left:10px;top:201px;width:9px;height:0;border-top:1px dotted #555"></div><svg class="ic" style="left:20px;top:193px;width:18px;height:16px" viewBox="0 0 18 16"><path d="M4 7h5" stroke="#333" stroke-width="1.300"/><path d="M8.500 3.500h5.500a3.500 3.500 0 0 1 0 7.500h-5.500z" fill="#3c3c3c" stroke="#7a7a7a" stroke-width="1"/><rect x="2" y="5.700" width="3" height="3.300" fill="#ecd21c"/></svg><span class="a" style="left:44.70px;top:193.76px;font-size:12.25px;line-height:14px;color:#3a3a3a;white-space:pre;letter-spacing:0.000px;">top:P__2</span></div><div class="a" style="left:5px;top:426px;width:182px;height:10px;background:linear-gradient(#f6f6f6 0,#f0f0f0 4px,#c2c6cc 5px,#d8dadd 10px)"></div><div class="hdr" style="left:4px;top:436px;width:183px;height:20px"></div><span class="a" style="left:17.70px;top:438.74px;font-size:12.3px;line-height:14px;color:#2e2e2e;white-space:pre;letter-spacing:0.055px;font-weight:bold;">Property Editor</span><div class="hb" style="left:142.5px;top:439.3px">?</div><div class="hb" style="left:157.3px;top:439.3px"><svg width="11" height="11" viewBox="0 0 11 11" style="position:absolute;left:0;top:0"><path d="M4.500 2h5v4.500h-5z" fill="#e8e8e8" stroke="#000" stroke-width="1.200"/><path d="M4 1.500h6" stroke="#000" stroke-width="2"/><path d="M1.500 5.500h5v4.500h-5z" fill="#e8e8e8" stroke="#000" stroke-width="1.200"/><path d="M1 5h6" stroke="#000" stroke-width="2"/></svg></div><div class="a" style="left:7px;top:459px;width:177px;height:166px;background:#fff;border-left:2px solid #222;border-top:2px solid #111"></div><div class="a" style="left:9px;top:608px;width:175px;height:16px;background:#a8a8a8"></div><div class="sbtn" style="left:9px;top:608px;width:16px;height:16px"></div><div class="sbtn" style="left:166px;top:608px;width:17px;height:16px"></div><svg class="ic" style="left:12px;top:611px;width:9px;height:10px" viewBox="0 0 9 10"><path d="M8.500 0.500l-8 4.500 8 4.500z" fill="#cdcdcd" stroke="#e4e4e4" stroke-width=".8"/></svg><svg class="ic" style="left:170px;top:611px;width:9px;height:10px" viewBox="0 0 9 10"><path d="M0.500 0.500l8 4.500-8 4.500z" fill="#cdcdcd" stroke="#e4e4e4" stroke-width=".8"/></svg><div class="a" style="left:25px;top:608px;width:121px;height:16px;border-radius:8px;background:linear-gradient(#d0d0d0,#bcbcbc);border:1px solid #a4a4a4"></div><div class="a" style="left:81px;top:612px;width:9px;height:8px;background:repeating-linear-gradient(90deg,#888 0,#888 1px,transparent 1px,transparent 2px)"></div>
<div class="a" style="left:193px;top:119px;width:709px;height:510px;background:#f0f0f0;border-left:2px solid #fff;border-top:2px solid #fff;border-bottom:2px solid #1c1c1c;box-shadow:inset 0 -1px 0 #fff"></div><div class="a" style="left:198px;top:125px;width:679px;height:477px;background:#000"></div><svg class="a" style="left:198px;top:125px;width:679px;height:477px" viewBox="198 125 679 477"><path d="M202 138.5h1M224 138.5h1M246 138.5h1M267 138.5h1M289 138.5h1M310 138.5h1M332 138.5h1M354 138.5h1M375 138.5h1M397 138.5h1M419 138.5h1M440 138.5h1M462 138.5h1M483 138.5h1M505 138.5h1M527 138.5h1M548 138.5h1M570 138.5h1M592 138.5h1M613 138.5h1M635 138.5h1M656 138.5h1M678 138.5h1M700 138.5h1M721 138.5h1M743 138.5h1M765 138.5h1M786 138.5h1M808 138.5h1M830 138.5h1M851 138.5h1M873 138.5h1M202 159.5h1M224 159.5h1M246 159.5h1M267 159.5h1M289 159.5h1M310 159.5h1M332 159.5h1M354 159.5h1M375 159.5h1M397 159.5h1M419 159.5h1M440 159.5h1M462 159.5h1M483 159.5h1M505 159.5h1M527 159.5h1M548 159.5h1M570 159.5h1M592 159.5h1M613 159.5h1M635 159.5h1M656 159.5h1M678 159.5h1M700 159.5h1M721 159.5h1M743 159.5h1M765 159.5h1M786 159.5h1M808 159.5h1M830 159.5h1M851 159.5h1M873 159.5h1M202 181.5h1M224 181.5h1M246 181.5h1M267 181.5h1M289 181.5h1M310 181.5h1M332 181.5h1M354 181.5h1M375 181.5h1M397 181.5h1M419 181.5h1M440 181.5h1M462 181.5h1M483 181.5h1M505 181.5h1M527 181.5h1M548 181.5h1M570 181.5h1M592 181.5h1M613 181.5h1M635 181.5h1M656 181.5h1M678 181.5h1M700 181.5h1M721 181.5h1M743 181.5h1M765 181.5h1M786 181.5h1M808 181.5h1M830 181.5h1M851 181.5h1M873 181.5h1M202 203.5h1M224 203.5h1M246 203.5h1M267 203.5h1M289 203.5h1M310 203.5h1M332 203.5h1M354 203.5h1M375 203.5h1M397 203.5h1M419 203.5h1M440 203.5h1M462 203.5h1M483 203.5h1M505 203.5h1M527 203.5h1M548 203.5h1M570 203.5h1M592 203.5h1M613 203.5h1M635 203.5h1M656 203.5h1M678 203.5h1M700 203.5h1M721 203.5h1M743 203.5h1M765 203.5h1M786 203.5h1M808 203.5h1M830 203.5h1M851 203.5h1M873 203.5h1M202 224.5h1M224 224.5h1M246 224.5h1M267 224.5h1M289 224.5h1M310 224.5h1M332 224.5h1M354 224.5h1M375 224.5h1M397 224.5h1M419 224.5h1M440 224.5h1M462 224.5h1M483 224.5h1M505 224.5h1M527 224.5h1M548 224.5h1M570 224.5h1M592 224.5h1M613 224.5h1M635 224.5h1M656 224.5h1M678 224.5h1M700 224.5h1M721 224.5h1M743 224.5h1M765 224.5h1M786 224.5h1M808 224.5h1M830 224.5h1M851 224.5h1M873 224.5h1M202 246.5h1M224 246.5h1M246 246.5h1M267 246.5h1M289 246.5h1M310 246.5h1M332 246.5h1M354 246.5h1M375 246.5h1M397 246.5h1M419 246.5h1M440 246.5h1M462 246.5h1M483 246.5h1M505 246.5h1M527 246.5h1M548 246.5h1M570 246.5h1M592 246.5h1M613 246.5h1M635 246.5h1M656 246.5h1M678 246.5h1M700 246.5h1M721 246.5h1M743 246.5h1M765 246.5h1M786 246.5h1M808 246.5h1M830 246.5h1M851 246.5h1M873 246.5h1M202 268.5h1M224 268.5h1M246 268.5h1M267 268.5h1M289 268.5h1M310 268.5h1M332 268.5h1M354 268.5h1M375 268.5h1M397 268.5h1M419 268.5h1M440 268.5h1M462 268.5h1M483 268.5h1M505 268.5h1M527 268.5h1M548 268.5h1M570 268.5h1M592 268.5h1M613 268.5h1M635 268.5h1M656 268.5h1M678 268.5h1M700 268.5h1M721 268.5h1M743 268.5h1M765 268.5h1M786 268.5h1M808 268.5h1M830 268.5h1M851 268.5h1M873 268.5h1M202 289.5h1M224 289.5h1M246 289.5h1M267 289.5h1M289 289.5h1M310 289.5h1M332 289.5h1M354 289.5h1M375 289.5h1M397 289.5h1M419 289.5h1M440 289.5h1M462 289.5h1M483 289.5h1M505 289.5h1M527 289.5h1M548 289.5h1M570 289.5h1M592 289.5h1M613 289.5h1M635 289.5h1M656 289.5h1M678 289.5h1M700 289.5h1M721 289.5h1M743 289.5h1M765 289.5h1M786 289.5h1M808 289.5h1M830 289.5h1M851 289.5h1M873 289.5h1M202 311.5h1M224 311.5h1M246 311.5h1M267 311.5h1M289 311.5h1M310 311.5h1M332 311.5h1M354 311.5h1M375 311.5h1M397 311.5h1M419 311.5h1M440 311.5h1M462 311.5h1M483 311.5h1M505 311.5h1M527 311.5h1M548 311.5h1M570 311.5h1M592 311.5h1M613 311.5h1M635 311.5h1M656 311.5h1M678 311.5h1M700 311.5h1M721 311.5h1M743 311.5h1M765 311.5h1M786 311.5h1M808 311.5h1M830 311.5h1M851 311.5h1M873 311.5h1M202 332.5h1M224 332.5h1M246 332.5h1M267 332.5h1M289 332.5h1M310 332.5h1M332 332.5h1M354 332.5h1M375 332.5h1M397 332.5h1M419 332.5h1M440 332.5h1M462 332.5h1M483 332.5h1M505 332.5h1M527 332.5h1M548 332.5h1M570 332.5h1M592 332.5h1M613 332.5h1M635 332.5h1M656 332.5h1M678 332.5h1M700 332.5h1M721 332.5h1M743 332.5h1M765 332.5h1M786 332.5h1M808 332.5h1M830 332.5h1M851 332.5h1M873 332.5h1M202 354.5h1M224 354.5h1M246 354.5h1M267 354.5h1M289 354.5h1M310 354.5h1M332 354.5h1M354 354.5h1M375 354.5h1M397 354.5h1M419 354.5h1M440 354.5h1M462 354.5h1M483 354.5h1M505 354.5h1M527 354.5h1M548 354.5h1M570 354.5h1M592 354.5h1M613 354.5h1M635 354.5h1M656 354.5h1M678 354.5h1M700 354.5h1M721 354.5h1M743 354.5h1M765 354.5h1M786 354.5h1M808 354.5h1M830 354.5h1M851 354.5h1M873 354.5h1M202 376.5h1M224 376.5h1M246 376.5h1M267 376.5h1M289 376.5h1M310 376.5h1M332 376.5h1M354 376.5h1M375 376.5h1M397 376.5h1M419 376.5h1M440 376.5h1M462 376.5h1M483 376.5h1M505 376.5h1M527 376.5h1M548 376.5h1M570 376.5h1M592 376.5h1M613 376.5h1M635 376.5h1M656 376.5h1M678 376.5h1M700 376.5h1M721 376.5h1M743 376.5h1M765 376.5h1M786 376.5h1M808 376.5h1M830 376.5h1M851 376.5h1M873 376.5h1M202 397.5h1M224 397.5h1M246 397.5h1M267 397.5h1M289 397.5h1M310 397.5h1M332 397.5h1M354 397.5h1M375 397.5h1M397 397.5h1M419 397.5h1M440 397.5h1M462 397.5h1M483 397.5h1M505 397.5h1M527 397.5h1M548 397.5h1M570 397.5h1M592 397.5h1M613 397.5h1M635 397.5h1M656 397.5h1M678 397.5h1M700 397.5h1M721 397.5h1M743 397.5h1M765 397.5h1M786 397.5h1M808 397.5h1M830 397.5h1M851 397.5h1M873 397.5h1M202 419.5h1M224 419.5h1M246 419.5h1M267 419.5h1M289 419.5h1M310 419.5h1M332 419.5h1M354 419.5h1M375 419.5h1M397 419.5h1M419 419.5h1M440 419.5h1M462 419.5h1M483 419.5h1M505 419.5h1M527 419.5h1M548 419.5h1M570 419.5h1M592 419.5h1M613 419.5h1M635 419.5h1M656 419.5h1M678 419.5h1M700 419.5h1M721 419.5h1M743 419.5h1M765 419.5h1M786 419.5h1M808 419.5h1M830 419.5h1M851 419.5h1M873 419.5h1M202 441.5h1M224 441.5h1M246 441.5h1M267 441.5h1M289 441.5h1M310 441.5h1M332 441.5h1M354 441.5h1M375 441.5h1M397 441.5h1M419 441.5h1M440 441.5h1M462 441.5h1M483 441.5h1M505 441.5h1M527 441.5h1M548 441.5h1M570 441.5h1M592 441.5h1M613 441.5h1M635 441.5h1M656 441.5h1M678 441.5h1M700 441.5h1M721 441.5h1M743 441.5h1M765 441.5h1M786 441.5h1M808 441.5h1M830 441.5h1M851 441.5h1M873 441.5h1M202 462.5h1M224 462.5h1M246 462.5h1M267 462.5h1M289 462.5h1M310 462.5h1M332 462.5h1M354 462.5h1M375 462.5h1M397 462.5h1M419 462.5h1M440 462.5h1M462 462.5h1M483 462.5h1M505 462.5h1M527 462.5h1M548 462.5h1M570 462.5h1M592 462.5h1M613 462.5h1M635 462.5h1M656 462.5h1M678 462.5h1M700 462.5h1M721 462.5h1M743 462.5h1M765 462.5h1M786 462.5h1M808 462.5h1M830 462.5h1M851 462.5h1M873 462.5h1M202 484.5h1M224 484.5h1M246 484.5h1M267 484.5h1M289 484.5h1M310 484.5h1M332 484.5h1M354 484.5h1M375 484.5h1M397 484.5h1M419 484.5h1M440 484.5h1M462 484.5h1M483 484.5h1M505 484.5h1M527 484.5h1M548 484.5h1M570 484.5h1M592 484.5h1M613 484.5h1M635 484.5h1M656 484.5h1M678 484.5h1M700 484.5h1M721 484.5h1M743 484.5h1M765 484.5h1M786 484.5h1M808 484.5h1M830 484.5h1M851 484.5h1M873 484.5h1M202 506.5h1M224 506.5h1M246 506.5h1M267 506.5h1M289 506.5h1M310 506.5h1M332 506.5h1M354 506.5h1M375 506.5h1M397 506.5h1M419 506.5h1M440 506.5h1M462 506.5h1M483 506.5h1M505 506.5h1M527 506.5h1M548 506.5h1M570 506.5h1M592 506.5h1M613 506.5h1M635 506.5h1M656 506.5h1M678 506.5h1M700 506.5h1M721 506.5h1M743 506.5h1M765 506.5h1M786 506.5h1M808 506.5h1M830 506.5h1M851 506.5h1M873 506.5h1M202 527.5h1M224 527.5h1M246 527.5h1M267 527.5h1M289 527.5h1M310 527.5h1M332 527.5h1M354 527.5h1M375 527.5h1M397 527.5h1M419 527.5h1M440 527.5h1M462 527.5h1M483 527.5h1M505 527.5h1M527 527.5h1M548 527.5h1M570 527.5h1M592 527.5h1M613 527.5h1M635 527.5h1M656 527.5h1M678 527.5h1M700 527.5h1M721 527.5h1M743 527.5h1M765 527.5h1M786 527.5h1M808 527.5h1M830 527.5h1M851 527.5h1M873 527.5h1M202 549.5h1M224 549.5h1M246 549.5h1M267 549.5h1M289 549.5h1M310 549.5h1M332 549.5h1M354 549.5h1M375 549.5h1M397 549.5h1M419 549.5h1M440 549.5h1M462 549.5h1M483 549.5h1M505 549.5h1M527 549.5h1M548 549.5h1M570 549.5h1M592 549.5h1M613 549.5h1M635 549.5h1M656 549.5h1M678 549.5h1M700 549.5h1M721 549.5h1M743 549.5h1M765 549.5h1M786 549.5h1M808 549.5h1M830 549.5h1M851 549.5h1M873 549.5h1M202 570.5h1M224 570.5h1M246 570.5h1M267 570.5h1M289 570.5h1M310 570.5h1M332 570.5h1M354 570.5h1M375 570.5h1M397 570.5h1M419 570.5h1M440 570.5h1M462 570.5h1M483 570.5h1M505 570.5h1M527 570.5h1M548 570.5h1M570 570.5h1M592 570.5h1M613 570.5h1M635 570.5h1M656 570.5h1M678 570.5h1M700 570.5h1M721 570.5h1M743 570.5h1M765 570.5h1M786 570.5h1M808 570.5h1M830 570.5h1M851 570.5h1M873 570.5h1M202 592.5h1M224 592.5h1M246 592.5h1M267 592.5h1M289 592.5h1M310 592.5h1M332 592.5h1M354 592.5h1M375 592.5h1M397 592.5h1M419 592.5h1M440 592.5h1M462 592.5h1M483 592.5h1M505 592.5h1M527 592.5h1M548 592.5h1M570 592.5h1M592 592.5h1M613 592.5h1M635 592.5h1M656 592.5h1M678 592.5h1M700 592.5h1M721 592.5h1M743 592.5h1M765 592.5h1M786 592.5h1M808 592.5h1M830 592.5h1M851 592.5h1M873 592.5h1" stroke="#9c9cb6" stroke-width="1" shape-rendering="crispEdges"/><path d="M223 203.5h3M224.5 202v3M223 376.5h3M224.5 375v3M223 549.5h3M224.5 548v3M396 203.5h3M397.5 202v3M396 376.5h3M397.5 375v3M396 549.5h3M397.5 548v3M569 203.5h3M570.5 202v3M569 376.5h3M570.5 375v3M569 549.5h3M570.5 548v3M742 203.5h3M743.5 202v3M742 376.5h3M743.5 375v3M742 549.5h3M743.5 548v3" stroke="#fff" stroke-width="1" shape-rendering="crispEdges"/><path d="M386 246.400H437M510 246.400H567M639 246.400H668M700 246.400H710.500V300" fill="none" stroke="#3a9be0" stroke-width="1.300"/><path d="M354 246.200l9.500-10.200h13.400l9.800 10.200-9.800 9.800h-13.400z" fill="#ff0000"/><path d="M667.2 246.200l9.500-10.200h13.400l9.800 10.200-9.800 9.800h-13.400z" fill="#ff0000"/><path d="M446 246.400h7.300l3-11.100 7.300 22 6-22 7.100 22 6-22 7 22 2.700-10.900h8.600" fill="none" stroke="#00c864" stroke-width="1.300" stroke-linejoin="round"/><rect x="436" y="242" width="10" height="9.300" fill="#ff0000"/><rect x="500.7" y="242" width="9.500" height="9.300" fill="#ff0000"/><path d="M576 246.400h7.300l3-11.100 7.300 22 6-22 7.100 22 6-22 7 22 2.700-10.900h8.600" fill="none" stroke="#00c864" stroke-width="1.300" stroke-linejoin="round"/><rect x="566" y="242" width="10" height="9.300" fill="#ff0000"/><rect x="630.7" y="242" width="9.500" height="9.300" fill="#ff0000"/><text x="333.700" y="253" font-family="Liberation Sans,sans-serif" font-size="16" fill="#ff0000" letter-spacing=".6">in</text><text x="636" y="252" font-family="Liberation Sans,sans-serif" font-size="16" fill="#ff0000" letter-spacing="1.400">top</text><text x="748.900" y="436" font-family="Liberation Sans,sans-serif" font-size="16" fill="#ff0000" letter-spacing="1.400">bot</text><text transform="translate(452.4 229.500) rotate(-90)" font-family="Liberation Sans,sans-serif" font-size="14" fill="#ff0000" textLength="15.500" lengthAdjust="spacingAndGlyphs">R2</text><text transform="translate(468.3 229.500) rotate(-90)" font-family="Liberation Sans,sans-serif" font-size="13.500" fill="#f58a1e" textLength="38.500" lengthAdjust="spacing">r=10K</text><text transform="translate(582.4 229.500) rotate(-90)" font-family="Liberation Sans,sans-serif" font-size="14" fill="#ff0000" textLength="15.500" lengthAdjust="spacingAndGlyphs">R3</text><text transform="translate(598.3 229.500) rotate(-90)" font-family="Liberation Sans,sans-serif" font-size="13.500" fill="#f58a1e" textLength="38.500" lengthAdjust="spacing">r=10K</text><text transform="translate(452 269) rotate(-90)" font-family="Liberation Sans,sans-serif" font-size="13.500" fill="#d8c8a0" fill-opacity=".9">in</text><text transform="translate(506 284.7) rotate(-90)" font-family="Liberation Sans,sans-serif" font-size="13.500" fill="#d8c8a0" fill-opacity=".9">net9</text><text transform="translate(582 284.7) rotate(-90)" font-family="Liberation Sans,sans-serif" font-size="13.500" fill="#d8c8a0" fill-opacity=".9">net9</text><text transform="translate(636 277.2) rotate(-90)" font-family="Liberation Sans,sans-serif" font-size="13.500" fill="#d8c8a0" fill-opacity=".9">top</text></svg><div class="a" style="left:883px;top:126px;width:16px;height:476px;background:#d6d6d6"></div><div class="sbtn" style="left:883px;top:126px;width:16px;height:15px;border-bottom:1px solid #5a5a5a"></div><div class="sbtn" style="left:883px;top:587px;width:16px;height:15px"></div><svg class="ic" style="left:886px;top:129px;width:10px;height:9px" viewBox="0 0 10 9"><path d="M0.500 8.500l4.500-8 4.500 8z" fill="#cdcdcd" stroke="#e4e4e4" stroke-width=".8"/></svg><svg class="ic" style="left:886px;top:590px;width:10px;height:9px" viewBox="0 0 10 9"><path d="M0.500 0.500l4.500 8 4.500-8z" fill="#cdcdcd" stroke="#e4e4e4" stroke-width=".8"/></svg><div class="a" style="left:883px;top:141px;width:16px;height:445px;border-radius:8px;background:#bababa"></div><div class="a" style="left:888px;top:359px;width:6px;height:9px;background:repeating-linear-gradient(#7a7a7a 0,#7a7a7a 1px,transparent 1px,transparent 2px)"></div><div class="a" style="left:198px;top:608px;width:679px;height:15.500px;background:#b4b4b4"></div><div class="sbtn" style="left:198px;top:608px;width:16px;height:16px"></div><div class="sbtn" style="left:861px;top:608px;width:16px;height:16px"></div><svg class="ic" style="left:865px;top:611px;width:9px;height:10px" viewBox="0 0 9 10"><path d="M0.500 0.500l8 4.500-8 4.500z" fill="#cdcdcd" stroke="#e4e4e4" stroke-width=".8"/></svg><svg class="ic" style="left:201px;top:611px;width:9px;height:10px" viewBox="0 0 9 10"><path d="M8.500 0.500l-8 4.500 8 4.500z" fill="#cdcdcd" stroke="#e4e4e4" stroke-width=".8"/></svg><div class="a" style="left:214px;top:608px;width:647px;height:16px;border-radius:8px;background:linear-gradient(#d2d2d2,#bcbcbc);border:1px solid #a6a6a6"></div><div class="a" style="left:533px;top:612px;width:9px;height:8px;background:repeating-linear-gradient(90deg,#888 0,#888 1px,transparent 1px,transparent 2px)"></div>
<div class="a" style="left:4px;top:629px;width:899px;height:20px;background:linear-gradient(#f6f6f6 0%,#e4e4e4 50%,#c6c6c6 100%);border-radius:0 0 5px 5px;border-bottom:1px solid #b0b0b0"></div><div class="a" style="left:11px;top:634px;width:5px;height:8px;background:repeating-linear-gradient(90deg,#888 0,#888 1px,transparent 1px,transparent 2px)"></div><span class="a" style="left:18.30px;top:631.74px;font-size:12.3px;line-height:14px;color:#3a3a3a;white-space:pre;letter-spacing:0.006px;">mouse L: showClickInfo()</span><span class="a" style="left:388.00px;top:631.74px;font-size:12.3px;line-height:14px;color:#3a3a3a;white-space:pre;letter-spacing:0.129px;">M: schHiMousePopUp()</span><span class="a" style="left:763.40px;top:631.74px;font-size:12.3px;line-height:14px;color:#3a3a3a;white-space:pre;letter-spacing:-0.005px;">R: schHiMousePopUp()</span><div class="a" style="left:4px;top:650px;width:44px;height:21px;background:#f8d4d4"></div><div class="a" style="left:48px;top:650px;width:1px;height:21px;background:#fff;border-left:1px solid #bbb"></div><span class="a" style="left:7.00px;top:652.74px;font-size:12.3px;line-height:14px;color:#3a3a3a;white-space:pre;letter-spacing:-0.310px;">19(37)</span><span class="a" style="left:59.00px;top:653.36px;font-size:10.5px;line-height:14px;color:#3a3a3a;white-space:pre;letter-spacing:0.000px;">&gt;</span><div class="a" style="left:816px;top:652px;width:1px;height:17px;background:#444"></div><span class="a" style="left:824.60px;top:653.74px;font-size:12.3px;line-height:14px;color:#3a3a3a;white-space:pre;letter-spacing:-0.135px;">Cmd: Sel: 0</span><div class="a" style="left:897px;top:653px;width:6px;height:15px;background:#999;border-right:1px solid #555;border-bottom:1px solid #555"></div><div class="a" style="left:0;top:673px;width:905px;height:2px;background:#d9dfe8"></div>
<div class="a" style="left:171px;top:265px;width:575px;height:349px;border-radius:7px 7px 6px 6px;border:1px solid #1c1c1c;box-shadow:0 3px 9px 2px rgba(0,0,0,.7);background:linear-gradient(90deg,#bcbcbc 0,#a8a8a8 4px,#808080 6px,#b4b4b4 7px,#8a8a8a 24px,#777 32px,#6e6e6e 60%,#5a5a5a 97%,#3c3c3c 99%,#555 100%)"></div><div class="a" style="left:200px;top:266px;width:545px;height:28px;border-radius:0 6px 0 0;background:radial-gradient(ellipse 40px 14px at 345px 16px,rgba(255,255,255,.16),rgba(255,255,255,0)),radial-gradient(ellipse 50px 14px at 445px 14px,rgba(255,255,255,.14),rgba(255,255,255,0)),linear-gradient(180deg,#303030 0%,#747474 38%,#646464 70%,#323232 100%)"></div><div class="a" style="left:172px;top:266px;width:32px;height:28px;border-radius:6px 0 0 0;background:linear-gradient(90deg,#c6c6c6 0,#c0c0c0 60%,rgba(110,110,110,0) 100%)"></div><div class="a" style="left:180px;top:276px;width:296px;height:8px;border-radius:4px;background:#d6d6d6;box-shadow:0 0 5px 5px #d4d4d4"></div><div class="a" style="left:198px;top:266px;width:547px;height:28px;border-radius:0 6px 0 0;background:linear-gradient(180deg,rgba(20,20,20,.9) 0%,rgba(30,30,30,.5) 12%,rgba(60,60,60,0) 26%,rgba(60,60,60,0) 76%,rgba(30,30,30,.55) 90%,rgba(20,20,20,.9) 100%);-webkit-mask-image:linear-gradient(90deg,transparent 0,#000 12px);mask-image:linear-gradient(90deg,transparent 0,#000 12px)"></div><div class="a" style="left:172px;top:266px;width:573px;height:347px;border-radius:6px 6px 5px 5px;box-shadow:inset 0 0 0 1px rgba(255,255,255,.7)"></div><span class="a" style="left:178.30px;top:272.84px;font-size:12px;line-height:14px;color:#0c0c14;white-space:pre;letter-spacing:-0.004px;">Symbol Generation Options (on csimcluster.ee.unlv.edu)</span><div class="a" style="left:692px;top:266px;width:47px;height:19px;border-radius:0 0 4px 4px;background:linear-gradient(#e28a7c 0%,#d0584a 45%,#bb2d1c 50%,#c6432f 100%);border:1px solid #5a1a10;border-top:0;box-shadow:inset 0 0 0 1px rgba(255,255,255,.35)"></div><svg class="ic" style="left:709px;top:270px;width:14px;height:11px" viewBox="0 0 14 11"><path d="M2 1.500l10 8M12 1.500l-10 8" stroke="#40100a" stroke-width="4"/><path d="M2 1.500l10 8M12 1.500l-10 8" stroke="#fff" stroke-width="2.400"/></svg><div class="a" style="left:173px;top:607px;width:571px;height:5px;background:linear-gradient(90deg,#a8a8a8 0,#8c8c8c 30px,#7c7c7c 50%,#6a6a6a 100%)"></div><div class="a" style="left:177px;top:293px;width:562px;height:313.500px;background:#f0f0f0;border:1px solid #454545;box-shadow:0 0 0 1px rgba(235,235,235,.65)"></div><span class="a" style="left:192.20px;top:302.74px;font-size:12.3px;line-height:14px;color:#3a3a3a;white-space:pre;letter-spacing:0.016px;">Library Name</span><span class="a" style="left:388.10px;top:302.74px;font-size:12.3px;line-height:14px;color:#3a3a3a;white-space:pre;letter-spacing:-0.052px;">Cell Name</span><span class="a" style="left:569.00px;top:302.74px;font-size:12.3px;line-height:14px;color:#3a3a3a;white-space:pre;letter-spacing:-0.083px;">View Name</span><div class="ro" style="left:185.500px;top:319px;width:181px;height:23px"></div><span class="a" style="left:189.50px;top:324.91px;font-family:'Liberation Mono',monospace;font-size:11.6px;line-height:14px;color:#333;white-space:pre">lab2</span><div class="ro" style="left:381px;top:319px;width:161.500px;height:23px"></div><span class="a" style="left:385.00px;top:324.91px;font-family:'Liberation Mono',monospace;font-size:11.6px;line-height:14px;color:#333;white-space:pre">my_DACbit_R2R</span><div class="ro" style="left:561.500px;top:319px;width:161.500px;height:23px"></div><span class="a" style="left:564.00px;top:324.91px;font-family:'Liberation Mono',monospace;font-size:11.6px;line-height:14px;color:#333;white-space:pre">symbol</span><span class="a" style="left:190.50px;top:350.74px;font-size:12.3px;line-height:14px;color:#3a3a3a;white-space:pre;letter-spacing:0.101px;">Pin Specifications</span><span class="a" style="left:676.00px;top:350.74px;font-size:12.3px;line-height:14px;color:#3a3a3a;white-space:pre;letter-spacing:-0.184px;">Attributes</span><div class="inp" style="left:276px;top:372px;width:401.500px;height:23px"></div><span class="a" style="left:198.80px;top:375.74px;font-size:12.3px;line-height:14px;color:#3a3a3a;white-space:pre;letter-spacing:-0.132px;">Left Pins</span><span class="a" style="left:281.00px;top:377.91px;font-family:'Liberation Mono',monospace;font-size:11.6px;line-height:14px;color:#333;white-space:pre">in</span><div class="btn" style="left:684.300px;top:375px;width:37.500px"></div><span class="a" style="left:694.00px;top:376.74px;font-size:12.3px;line-height:14px;color:#2c2c2c;white-space:pre;letter-spacing:0.020px;">List</span><div class="inp" style="left:276px;top:402px;width:401.500px;height:23px"></div><span class="a" style="left:198.80px;top:405.74px;font-size:12.3px;line-height:14px;color:#3a3a3a;white-space:pre;letter-spacing:-0.229px;">Right Pins</span><div class="btn" style="left:684.300px;top:405px;width:37.500px"></div><span class="a" style="left:694.00px;top:406.74px;font-size:12.3px;line-height:14px;color:#2c2c2c;white-space:pre;letter-spacing:0.020px;">List</span><div class="inp" style="left:276px;top:432px;width:401.500px;height:23px"></div><span class="a" style="left:198.20px;top:435.74px;font-size:12.3px;line-height:14px;color:#3a3a3a;white-space:pre;letter-spacing:0.118px;">Top Pins</span><span class="a" style="left:279.40px;top:437.91px;font-family:'Liberation Mono',monospace;font-size:11.6px;line-height:14px;color:#333;white-space:pre">top</span><div class="btn" style="left:684.300px;top:435px;width:37.500px"></div><span class="a" style="left:694.00px;top:436.74px;font-size:12.3px;line-height:14px;color:#2c2c2c;white-space:pre;letter-spacing:0.020px;">List</span><div class="inp" style="left:276px;top:462px;width:401.500px;height:23px"></div><span class="a" style="left:198.20px;top:465.74px;font-size:12.3px;line-height:14px;color:#3a3a3a;white-space:pre;letter-spacing:-0.231px;">Bottom Pins</span><span class="a" style="left:279.40px;top:467.91px;font-family:'Liberation Mono',monospace;font-size:11.6px;line-height:14px;color:#333;white-space:pre">bot</span><div class="btn" style="left:684.300px;top:465px;width:37.500px"></div><span class="a" style="left:694.00px;top:466.74px;font-size:12.3px;line-height:14px;color:#2c2c2c;white-space:pre;letter-spacing:0.020px;">List</span><span class="a" style="left:190.50px;top:490.74px;font-size:12.3px;line-height:14px;color:#3a3a3a;white-space:pre;letter-spacing:0.108px;">Exclude Inherited Connection Pins:</span><div class="rd" style="left:202px;top:519px"></div><div class="rd" style="left:259.5px;top:519px"></div><div class="rd" style="left:301.5px;top:519px"></div><div class="a" style="left:205px;top:522px;width:6px;height:6px;border-radius:50%;background:radial-gradient(circle at 50% 40%,#e81010,#b80000)"></div><span class="a" style="left:220.40px;top:518.74px;font-size:12.3px;line-height:14px;color:#3a3a3a;white-space:pre;letter-spacing:-0.101px;">None</span><span class="a" style="left:277.70px;top:518.74px;font-size:12.3px;line-height:14px;color:#3a3a3a;white-space:pre;letter-spacing:0.115px;">All</span><span class="a" style="left:319.80px;top:518.74px;font-size:12.3px;line-height:14px;color:#3a3a3a;white-space:pre;letter-spacing:0.079px;">Only these:</span><div class="inp" style="left:401.400px;top:517px;width:276px;height:23px"></div><span class="a" style="left:183.30px;top:560.74px;font-size:12.3px;line-height:14px;color:#3a3a3a;white-space:pre;letter-spacing:0.186px;">Load/Save</span><span class="a" style="left:323.10px;top:560.74px;font-size:12.3px;line-height:14px;color:#3a3a3a;white-space:pre;letter-spacing:0.029px;">Edit Attributes</span><span class="a" style="left:468.20px;top:560.74px;font-size:12.3px;line-height:14px;color:#3a3a3a;white-space:pre;letter-spacing:0.045px;">Edit Labels</span><span class="a" style="left:613.40px;top:560.74px;font-size:12.3px;line-height:14px;color:#3a3a3a;white-space:pre;letter-spacing:-0.033px;">Edit Properties</span><div class="cb" style="left:253px;top:561.500px"></div><div class="cb" style="left:417px;top:561.500px"></div><div class="cb" style="left:543px;top:561.500px"></div><div class="cb" style="left:707px;top:561.500px"></div><div class="btn" style="left:518.500px;top:585.700px;width:47px;background:linear-gradient(#d81818 0%,#c00000 50%,#9a0000 100%);border-color:#800"></div><span class="a" style="left:533.30px;top:587.56px;font-size:12.8px;line-height:14px;color:#fff;white-space:pre;letter-spacing:0.200px;font-weight:bold;">OK</span><div class="btn" style="left:569px;top:585.700px;width:58px"></div><span class="a" style="left:579.30px;top:587.74px;font-size:12.3px;line-height:14px;color:#2c2c2c;white-space:pre;letter-spacing:0.283px;">Cancel</span><div class="btn" style="left:630.500px;top:585.700px;width:53px"></div><span class="a" style="left:641.60px;top:587.74px;font-size:12.3px;line-height:14px;color:#2c2c2c;white-space:pre;letter-spacing:0.158px;">Apply</span><div class="btn" style="left:686.500px;top:585.700px;width:49px"></div><span class="a" style="left:698.00px;top:587.74px;font-size:12.3px;line-height:14px;color:#2c2c2c;white-space:pre;letter-spacing:0.068px;">Help</span>
</div></body></html>
